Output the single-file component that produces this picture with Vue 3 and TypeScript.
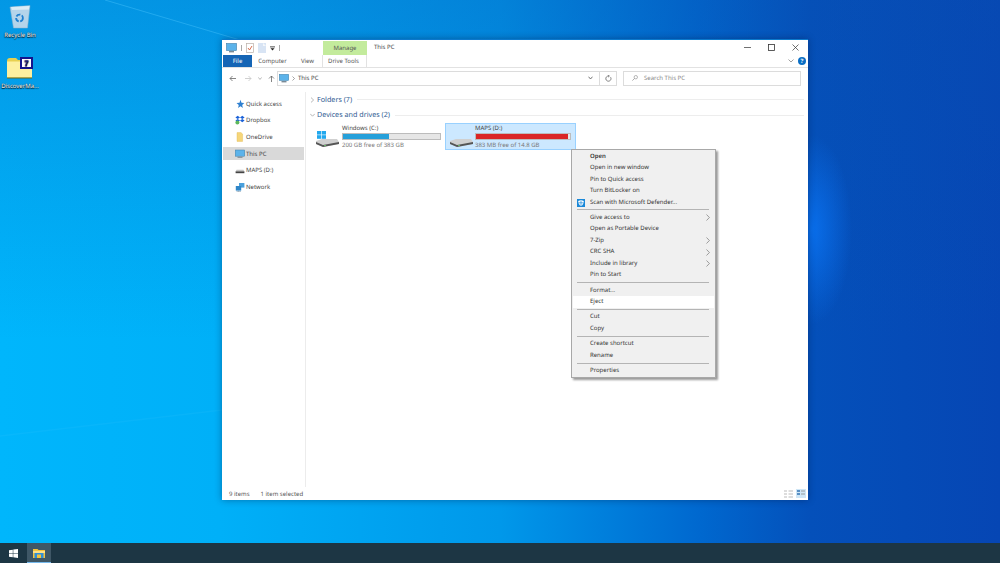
<script setup lang="ts">
type Item = { label?: string; bold?: boolean; arrow?: boolean; hot?: boolean; shield?: boolean; sep?: boolean }
const menu: Item[] = [
  { label: 'Open', bold: true },
  { label: 'Open in new window' },
  { label: 'Pin to Quick access' },
  { label: 'Turn BitLocker on' },
  { label: 'Scan with Microsoft Defender...', shield: true },
  { sep: true },
  { label: 'Give access to', arrow: true },
  { label: 'Open as Portable Device' },
  { label: '7-Zip', arrow: true },
  { label: 'CRC SHA', arrow: true },
  { label: 'Include in library', arrow: true },
  { label: 'Pin to Start' },
  { sep: true },
  { label: 'Format...' },
  { label: 'Eject', hot: true },
  { sep: true },
  { label: 'Cut' },
  { label: 'Copy' },
  { sep: true },
  { label: 'Create shortcut' },
  { label: 'Rename' },
  { sep: true },
  { label: 'Properties' },
]
const nav = [
  { label: 'Quick access', icon: 'star' },
  { label: 'Dropbox', icon: 'dropbox' },
  { label: 'OneDrive', icon: 'folder' },
  { label: 'This PC', icon: 'pc', active: true },
  { label: 'MAPS (D:)', icon: 'drive' },
  { label: 'Network', icon: 'network' },
]
</script>

<template>
  <div class="desktop">
    <svg class="wall" viewBox="0 0 1000 563" preserveAspectRatio="none" aria-hidden="true">
      <defs>
        <linearGradient id="base" x1="0" y1="0" x2="1" y2="0">
          <stop offset="0" stop-color="#00b6fc" />
          <stop offset="0.22" stop-color="#00b0f8" />
          <stop offset="0.5" stop-color="#0098ea" />
          <stop offset="0.7" stop-color="#0068cf" />
          <stop offset="0.81" stop-color="#0450ba" />
          <stop offset="1" stop-color="#0646b4" />
        </linearGradient>
        <linearGradient id="shade" x1="0" y1="0" x2="0" y2="1">
          <stop offset="0" stop-color="#0a50b0" stop-opacity="0.3" />
          <stop offset="1" stop-color="#0a50b0" stop-opacity="0" />
        </linearGradient>
        <radialGradient id="glow">
          <stop offset="0" stop-color="#0a74f4" stop-opacity="0.85" />
          <stop offset="1" stop-color="#0a74f4" stop-opacity="0" />
        </radialGradient>
      </defs>
      <rect width="1000" height="563" fill="url(#base)" />
      <rect width="1000" height="340" fill="url(#shade)" />
      <ellipse cx="812" cy="230" rx="40" ry="95" fill="url(#glow)" />
      <path d="M105 0 L240 40" stroke="#50c8ff" stroke-opacity=".4" stroke-width="1" />
      <path d="M0 436 L222 410" stroke="#50d0ff" stroke-opacity=".1" stroke-width="1.5" />
    </svg>

    <div class="icons">
      <div class="dicon">
        <svg width="22" height="26" viewBox="0 0 22 26">
          <path d="M1 3 L21 1.5 L18.5 24 L4.5 24 Z" fill="#b4d4ea" stroke="#8fb2c8" stroke-width=".5" />
          <path d="M2 3 L20.5 2 L20 5.5 L3 6 Z" fill="#dcecf6" />
          <circle cx="10.5" cy="14" r="3.4" fill="none" stroke="#2080d0" stroke-width="1.8" stroke-dasharray="4.5 1.5" />
        </svg>
        <span>Recycle Bin</span>
      </div>
      <div class="dicon second">
        <svg width="26" height="24" viewBox="0 0 26 24">
          <path d="M0 4 Q0 1 3 1 H9 L11 3 H25 V21 H0 Z" fill="#e8d050" />
          <rect x="0" y="4.5" width="25" height="16" fill="#fdf0a0" />
          <rect x="0" y="20.5" width="25" height="1" fill="#6a6a20" />
          <rect x="13" y="0" width="13" height="12" fill="#14148c" />
          <rect x="15" y="2" width="9" height="8" fill="#fff" />
          <text x="19.5" y="9.2" font-size="8" font-weight="700" text-anchor="middle" fill="#14148c" font-family="Liberation Sans, sans-serif">7</text>
        </svg>
        <span>DiscoverMa...</span>
      </div>
    </div>

    <main class="window">
      <header class="titlebar">
        <div class="qat">
          <svg width="11" height="10" viewBox="0 0 11 10"><rect x=".5" y=".5" width="10" height="7" fill="#5cb3ea" stroke="#3d7ea8" stroke-width=".6" /><rect x="3" y="8" width="5" height="1.4" fill="#7a8a96" /></svg>
          <i class="qsep"></i>
          <svg width="8" height="10" viewBox="0 0 8 10"><rect x=".5" y=".5" width="7" height="9" fill="#fff" stroke="#b9b0a8" stroke-width=".7" /><path d="M2 5 L3.5 7 L6 3" stroke="#d2603e" fill="none" stroke-width=".9" /></svg>
          <svg width="8" height="10" viewBox="0 0 8 10"><rect width="8" height="10" fill="#d8e4f4" /><path d="M5 0 L8 3 H5 Z" fill="#f4f7fb" /></svg>
          <svg width="5" height="5" viewBox="0 0 5 5"><rect y=".5" width="5" height=".8" fill="#222" /><path d="M.5 2.2 H4.5 L2.5 4.6 Z" fill="#222" /></svg>
          <i class="qsep"></i>
        </div>
        <div class="manage">Manage</div>
        <div class="title">This PC</div>
        <div class="winbtns">
          <svg width="7" height="7" viewBox="0 0 7 7"><path d="M0 3.5 H7" stroke="#333" stroke-width=".7" /></svg>
          <svg width="7" height="7" viewBox="0 0 7 7"><rect x=".5" y=".5" width="6" height="6" fill="none" stroke="#333" stroke-width=".8" /></svg>
          <svg width="7" height="7" viewBox="0 0 7 7"><path d="M.5 .5 L6.5 6.5 M6.5 .5 L.5 6.5" stroke="#333" stroke-width=".7" /></svg>
        </div>
      </header>

      <nav class="tabs">
        <div class="tab file">File</div>
        <div class="tab">Computer</div>
        <div class="tab">View</div>
        <div class="tab tools">Drive Tools</div>
        <div class="tabend">
          <svg width="6" height="4" viewBox="0 0 6 4"><path d="M.5 .5 L3 3 L5.5 .5" fill="none" stroke="#777" stroke-width=".7" /></svg>
          <div class="help">?</div>
        </div>
      </nav>

      <div class="addressbar">
        <svg class="arr back" width="7" height="7" viewBox="0 0 7 7"><path d="M7 3.5 H1 M3.5 1 L1 3.5 L3.5 6" fill="none" stroke="#666" stroke-width=".8" /></svg>
        <svg class="arr" width="7" height="7" viewBox="0 0 7 7"><path d="M0 3.5 H6 M3.5 1 L6 3.5 L3.5 6" fill="none" stroke="#c4c4c4" stroke-width=".8" /></svg>
        <svg class="arr" width="4" height="3" viewBox="0 0 4 3"><path d="M.3 .4 L2 2.4 L3.7 .4" fill="none" stroke="#888" stroke-width=".6" /></svg>
        <svg class="arr up" width="7" height="7" viewBox="0 0 7 7"><path d="M3.5 7 V1 M1 3.5 L3.5 1 L6 3.5" fill="none" stroke="#666" stroke-width=".8" /></svg>
        <div class="path">
          <svg width="10" height="9" viewBox="0 0 10 9"><rect x=".3" y=".3" width="9.4" height="6.2" fill="#5cb3ea" stroke="#3d7ea8" stroke-width=".5" /><rect x="2.5" y="7" width="5" height="1.4" fill="#7a8a96" /></svg>
          <svg width="3" height="5" viewBox="0 0 3 5"><path d="M.5 .5 L2.5 2.5 L.5 4.5" fill="none" stroke="#666" stroke-width=".6" /></svg>
          <span class="pathtext">This PC</span>
          <svg class="pathdrop" width="5" height="4" viewBox="0 0 5 4"><path d="M.5 .7 L2.5 3 L4.5 .7" fill="none" stroke="#555" stroke-width=".8" /></svg>
          <div class="refresh">
            <svg width="7" height="7" viewBox="0 0 7 7"><path d="M5.6 2.2 A2.6 2.6 0 1 1 3.5 1 M3 0 L4.4 1 L3 2.2" fill="none" stroke="#555" stroke-width=".7" /></svg>
          </div>
        </div>
        <div class="search">
          <svg width="6" height="6" viewBox="0 0 6 6"><circle cx="3.8" cy="2.2" r="1.7" fill="none" stroke="#888" stroke-width=".6" /><path d="M2.6 3.4 L.4 5.6" stroke="#888" stroke-width=".7" /></svg>
          <span>Search This PC</span>
        </div>
      </div>

      <div class="body">
        <aside class="side">
          <div v-for="n in nav" :key="n.label" class="navrow" :class="{ active: n.active }">
            <svg class="navicon" width="10" height="10" viewBox="0 0 10 10">
              <path v-if="n.icon === 'star'" d="M5.5 .8 L6.5 3.7 L9.3 3.9 L7.2 5.9 L7.9 9 L5.5 7.3 L3 9 L3.8 5.9 L1.5 3.9 L4.5 3.7 Z" fill="#2e7fd0" />
              <g v-else-if="n.icon === 'dropbox'">
                <path d="M2.7 .8 L5 2.4 L2.7 4 L.4 2.4 Z M7.3 .8 L9.6 2.4 L7.3 4 L5 2.4 Z M2.7 4 L5 5.6 L2.7 7.2 L.4 5.6 Z M7.3 4 L9.6 5.6 L7.3 7.2 L5 5.6 Z" fill="#1c62d8" />
                <circle cx="2.4" cy="7.6" r="2" fill="#5cb85c" />
              </g>
              <path v-else-if="n.icon === 'folder'" d="M2 .6 H6 L7.6 2 V9.4 H2 Z" fill="#f6d67a" stroke="#e0b850" stroke-width=".4" />
              <g v-else-if="n.icon === 'pc'">
                <rect x=".3" y="1" width="9.4" height="6.2" fill="#5cb3ea" stroke="#3d7ea8" stroke-width=".5" />
                <rect x="2.5" y="7.6" width="5" height="1.2" fill="#7a8a96" />
              </g>
              <g v-else-if="n.icon === 'drive'">
                <path d="M1.6 4.8 H8.4 L9.4 6.4 H.6 Z" fill="#c4c4c4" />
                <rect x=".6" y="6.4" width="8.8" height="1.8" fill="#444" />
              </g>
              <g v-else>
                <rect x="4" y="1" width="5.4" height="4.6" fill="#4aa0dc" />
                <rect x=".8" y="4" width="5.4" height="4.6" fill="#2f86c8" />
                <path d="M3.5 8.6 V9.6 M1.5 9.6 H6" stroke="#6a8aa0" stroke-width=".5" />
              </g>
            </svg>
            <span>{{ n.label }}</span>
          </div>
        </aside>

        <section class="content">
          <div class="group">
            <svg width="5" height="6" viewBox="0 0 5 6"><path d="M1 .6 L3.6 3 L1 5.4" fill="none" stroke="#999" stroke-width=".7" /></svg>
            <span class="gtitle">Folders (7)</span>
            <i class="gline"></i>
          </div>
          <div class="group">
            <svg width="5" height="6" viewBox="0 0 5 6"><path d="M.2 1.8 L2.5 4.2 L4.8 1.8" fill="none" stroke="#999" stroke-width=".7" /></svg>
            <span class="gtitle">Devices and drives (2)</span>
            <i class="gline"></i>
          </div>
          <div class="drives">
            <div class="drive">
              <svg class="dicn" width="24" height="17" viewBox="0 0 24 17">
                <rect x="2" y="0" width="4.2" height="3.6" fill="#22a8ee" /><rect x="6.8" y="0" width="4.2" height="3.6" fill="#22a8ee" />
                <rect x="2" y="4.2" width="4.2" height="3.6" fill="#22a8ee" /><rect x="6.8" y="4.2" width="4.2" height="3.6" fill="#22a8ee" />
                <path d="M1 10 L7 8 H22 L24 11 V13 L8 16 L1 13 Z" fill="#d0d0d0" />
                <path d="M1 11 L8 14 L24 11 V13 L8 16 L1 13 Z" fill="#555" />
                <rect x="9" y="14" width="2" height=".8" fill="#6fce6f" />
              </svg>
              <div class="dinfo">
                <div class="dname">Windows (C:)</div>
                <div class="bar"><div class="fill blue" :style="{ width: '47.5%' }"></div></div>
                <div class="dfree">200 GB free of 383 GB</div>
              </div>
            </div>
            <div class="drive selected">
              <svg class="dicn" width="24" height="17" viewBox="0 0 24 17">
                <path d="M1 10 L7 8 H22 L24 11 V13 L8 16 L1 13 Z" fill="#d0d0d0" />
                <path d="M1 11 L8 14 L24 11 V13 L8 16 L1 13 Z" fill="#555" />
                <rect x="9" y="14" width="2" height=".8" fill="#6fce6f" />
              </svg>
              <div class="dinfo">
                <div class="dname">MAPS (D:)</div>
                <div class="bar"><div class="fill red" :style="{ width: '97.5%' }"></div></div>
                <div class="dfree">383 MB free of 14.8 GB</div>
              </div>
            </div>
          </div>
        </section>
      </div>

      <footer class="status">
        <span>9 items</span>
        <span class="st2">1 item selected</span>
        <div class="views">
          <svg width="9" height="8" viewBox="0 0 9 8"><path d="M0 1 H3 M4.5 1 H9 M0 4 H3 M4.5 4 H9 M0 7 H3 M4.5 7 H9" stroke="#bbb" stroke-width="1.2" /></svg>
          <svg width="10" height="9" viewBox="0 0 10 9"><rect width="10" height="9" fill="#cfe6f6" /><rect x="1" y="1" width="3" height="2" fill="#5a90c4" /><rect x="1" y="4" width="3" height="2" fill="#5a90c4" /><path d="M5 2 H9 M5 5 H9" stroke="#888" stroke-width=".8" /></svg>
        </div>
      </footer>

      <div class="menu">
        <template v-for="(m, i) in menu" :key="i">
          <div v-if="m.sep" class="msep"></div>
          <div v-else class="mitem" :class="{ bold: m.bold, hot: m.hot }">
            <svg v-if="m.shield" class="shield" width="8" height="8" viewBox="0 0 8 8"><rect width="8" height="8" fill="#1a88d8" /><path d="M4 1 L6.8 2 Q6.8 5.6 4 7.2 Q1.2 5.6 1.2 2 Z" fill="#fff" /><path d="M4 1.4 V7 M1.4 3.8 H6.6" stroke="#1a88d8" stroke-width=".7" /></svg>
            <span>{{ m.label }}</span>
            <svg v-if="m.arrow" class="marrow" width="4" height="7" viewBox="0 0 4 7"><path d="M.5 .5 L3.4 3.5 L.5 6.5" fill="none" stroke="#777" stroke-width=".7" /></svg>
          </div>
        </template>
      </div>
    </main>

    <div class="taskbar">
      <div class="start">
        <svg width="9" height="9" viewBox="0 0 9 9"><path d="M0 1.3 L3.8 .7 V4.2 H0 Z M4.3 .6 L9 0 V4.2 H4.3 Z M0 4.7 H3.8 V8.2 L0 7.7 Z M4.3 4.7 H9 V9 L4.3 8.3 Z" fill="#fff" /></svg>
      </div>
      <div class="task">
        <svg width="12" height="10" viewBox="0 0 12 10"><path d="M0 1 H4.5 L5.5 2 H12 V10 H0 Z" fill="#f5c33b" /><rect x="0" y="3" width="12" height="2" fill="#fbe08a" /><rect x="1.5" y="5" width="9" height="5" fill="#2e8fd8" /><rect x="4" y="6.5" width="4" height="3.5" fill="#f5c33b" /></svg>
      </div>
    </div>
  </div>
</template>

<style>
html, body { margin: 0; overflow: hidden; }
</style>

<style scoped>
.desktop {
  position: relative;
  width: 1000px;
  height: 563px;
  overflow: hidden;
  font-family: "Noto Sans", "Open Sans", sans-serif;
  font-size: 6px;
  text-rendering: geometricPrecision;
  color: #444;
  display: flex;
  flex-direction: column;
  justify-content: flex-end;
}
.wall { position: absolute; inset: 0; width: 100%; height: 100%; }
.icons { position: absolute; left: 0; top: 4px; width: 40px; display: flex; flex-direction: column; }
.dicon { display: flex; flex-direction: column; align-items: center; gap: 1px; color: #fff; text-shadow: 0 0 1px #000, 0 1px 1px #000; height: 52px; }
.dicon span { white-space: nowrap; font-size: 6px; }
.dicon.second { padding-top: 1px; }
.window {
  position: absolute;
  left: 222px;
  top: 39px;
  width: 586px;
  height: 461px;
  background: #fff;
  border-top: 1px solid #0b78cc;
  box-sizing: border-box;
  display: flex;
  flex-direction: column;
  box-shadow: 0 0 7px rgba(0, 20, 60, .4);
}
.titlebar { height: 15px; display: flex; align-items: flex-start; position: relative; flex: none; }
.qat { display: flex; align-items: center; gap: 4px; padding: 3px 0 0 4px; width: 102px; box-sizing: border-box; flex: none; }
.qsep { width: 1px; height: 6px; background: #aaa; }
.manage { width: 44px; margin-left: -1px; height: 14px; margin-top: 1px; background: #c3eb9c; text-align: center; line-height: 14px; color: #555; box-sizing: border-box; flex: none; }
.title { margin-left: 7px; line-height: 14px; color: #444; }
.winbtns { margin-left: auto; display: flex; gap: 17px; padding: 4px 9px 0 0; }
.tabs { height: 12px; display: flex; align-items: stretch; border-bottom: 1px solid #e2e2e2; flex: none; box-sizing: content-box; color: #555; }
.tab { display: flex; align-items: center; justify-content: center; flex: none; }
.tab.file { width: 29px; margin-left: 1px; background: #1565b5; color: #fff; }
.tab:nth-child(2) { width: 41px; }
.tab:nth-child(3) { width: 29px; }
.tab.tools { width: 45px; padding-right: 2px; border-left: 1px solid #e2e2e2; border-right: 1px solid #e2e2e2; background: #fff; box-sizing: border-box; }
.tabend { margin-left: auto; display: flex; align-items: center; gap: 4px; padding-right: 2px; }
.help { width: 8px; height: 8px; border-radius: 50%; background: #0a6ec4; color: #fff; font-size: 6px; font-weight: 700; line-height: 8px; text-align: center; }
.addressbar { display: flex; align-items: center; height: 16px; margin-top: 2px; padding-left: 7px; flex: none; }
.arr { margin-right: 6px; flex: none; }
.arr.back { margin-right: 9px; }
.arr.up { margin-right: 2px; }
.path { width: 340px; height: 15px; border: 1px solid #dcdcdc; box-sizing: border-box; display: flex; align-items: center; gap: 3px; padding-left: 1px; flex: none; }
.pathtext { color: #444; margin-left: 0; }
.pathdrop { margin-left: auto; margin-right: 3px; }
.refresh { width: 16px; height: 100%; border-left: 1px solid #dcdcdc; display: flex; align-items: center; justify-content: center; }
.search { margin-left: 6px; width: 178px; height: 15px; border: 1px solid #dcdcdc; box-sizing: border-box; display: flex; align-items: center; gap: 6px; padding-left: 8px; color: #888; flex: none; }
.body { flex: 1; display: flex; min-height: 0; margin-top: 6px; }
.side { width: 83px; border-right: 1px solid #ececec; padding-top: 5px; flex: none; }
.navrow { height: 13px; margin: 0 1px 3.7px; display: flex; align-items: center; padding-left: 12px; }
.navrow.active { background: #d9d9d9; }
.navicon { flex: none; margin-right: 1px; }
.content { flex: 1; padding: 0 4px 0 4px; }
.group { height: 15.5px; display: flex; align-items: center; gap: 2px; }
.gtitle { font-size: 7.2px; color: #2f5b92; white-space: nowrap; }
.gline { flex: 1; height: 1px; background: #ededed; margin-left: 3px; }
.drives { display: flex; padding-left: 4px; }
.drive { width: 131px; height: 27px; display: flex; align-items: flex-start; box-sizing: border-box; padding: 1px 0 0 1px; }
.drive.selected { background: #cce8ff; border: 1px solid #99d1ff; padding: 0 0 0 3px; }
.dicn { flex: none; margin-right: 3px; margin-top: 7px; }
.selected .dicn { margin-right: 2px; }
.dinfo { flex: 1; min-width: 0; padding: 0 4px 0 0; }
.dname { line-height: 9px; color: #444; }
.bar { height: 7px; background: #e6e6e6; border: 1px solid #bcbcbc; box-sizing: border-box; margin: 0 0 1px; }
.fill { height: 100%; }
.fill.blue { background: #26a0da; }
.fill.red { background: #da2626; }
.dfree { color: #777; line-height: 8px; }
.status { height: 13px; display: flex; align-items: center; padding-left: 7px; flex: none; color: #555; }
.st2 { margin-left: 11px; }
.views { margin-left: auto; display: flex; align-items: center; gap: 3px; padding-right: 2px; }
.menu {
  position: absolute;
  left: 349px;
  top: 108.5px;
  width: 145px;
  box-sizing: border-box;
  background: #f0f0f0;
  border: 1px solid #a8a8a8;
  box-shadow: 2px 2px 2px rgba(0, 0, 0, .4);
  padding: 1px;
  color: #333;
}
.mitem { height: 11.5px; line-height: 11.5px; padding-left: 17px; position: relative; white-space: nowrap; }
.mitem.bold { font-weight: 600; }
.mitem.hot { background: #fff; }
.msep { height: 1px; background: #b4b4b4; margin: 1.4px 5px 1.4px 4px; }
.shield { position: absolute; left: 4px; top: 2px; }
.marrow { position: absolute; right: 4px; top: 2.5px; }
.taskbar { position: relative; height: 20px; background: #1d3644; display: flex; flex: none; }
.start { width: 27px; display: flex; align-items: center; justify-content: center; }
.task { width: 24px; background: #3f5766; display: flex; align-items: center; justify-content: center; border-bottom: 1px solid #76b9ed; box-sizing: border-box; }
</style>
